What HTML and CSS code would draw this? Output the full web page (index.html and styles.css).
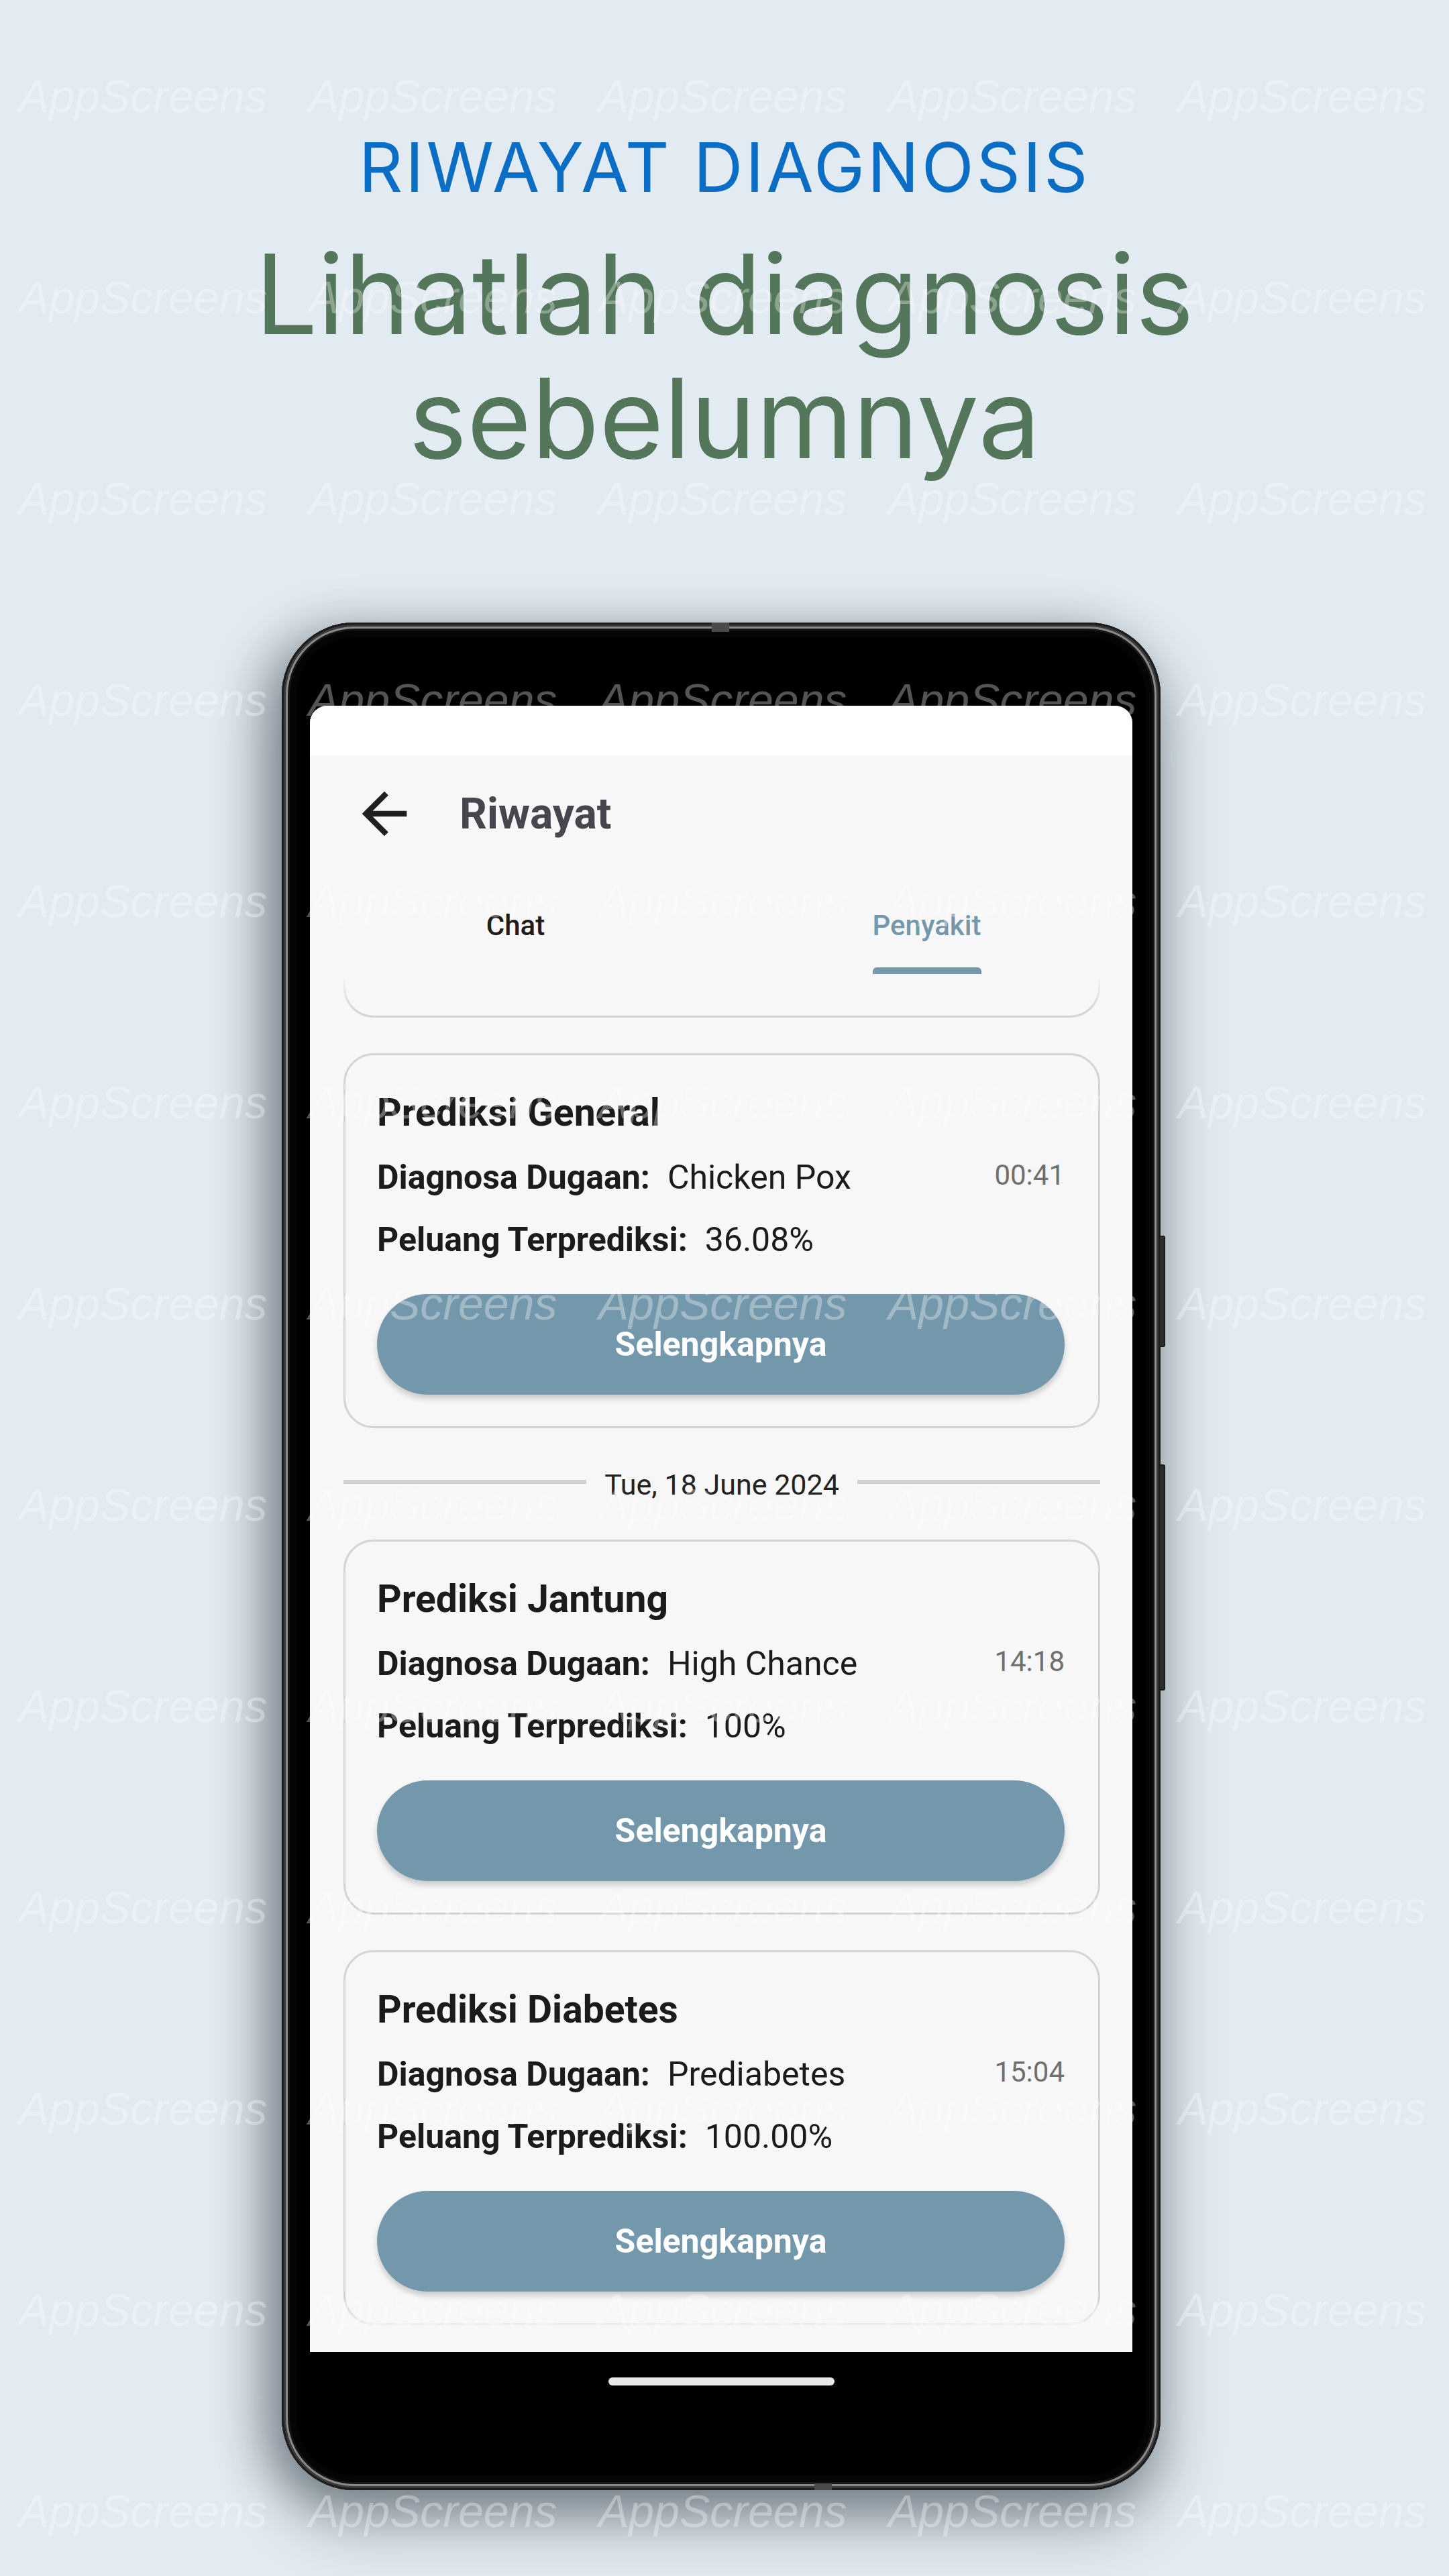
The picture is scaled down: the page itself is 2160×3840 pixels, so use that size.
FILE: index.html
```html
<!DOCTYPE html>
<html lang="id">
<head>
<meta charset="utf-8">
<title>Riwayat Diagnosis</title>
<link rel="stylesheet" href="styles.css">
</head>
<body>
<main class="page">
  <header class="hero">
    <p class="eyebrow">RIWAYAT DIAGNOSIS</p>
    <h1 class="headline">Lihatlah diagnosis<br>sebelumnya</h1>
  </header>

  <div class="phone">
    <span class="antenna antenna-top"></span>
    <span class="antenna antenna-bottom"></span>
    <span class="side-btn side-btn-1"></span>
    <span class="side-btn side-btn-2"></span>

    <div class="screen">
      <div class="statusbar"></div>
      <div class="appbar">
        <svg class="back" viewBox="0 0 24 24" aria-hidden="true"><path d="M20 11H7.83l5.59-5.59L12 4l-8 8 8 8 1.41-1.41L7.83 13H20v-2z"/></svg>
        <span class="appbar-title">Riwayat</span>
      </div>
      <div class="tabs">
        <div class="tab"><span class="tab-label">Chat</span><span class="tab-ind"></span></div>
        <div class="tab tab-active"><span class="tab-label">Penyakit</span><span class="tab-ind"></span></div>
      </div>

      <div class="list">
        <div class="card-tail"></div>

        <article class="card">
          <h2 class="card-title">Prediksi General</h2>
          <div class="card-row">
            <p class="row-text"><b>Diagnosa Dugaan:</b><span class="val">Chicken Pox</span></p>
            <span class="time">00:41</span>
          </div>
          <div class="card-row card-row-2">
            <p class="row-text"><b>Peluang Terprediksi:</b><span class="val">36.08%</span></p>
          </div>
          <button class="more">Selengkapnya</button>
        </article>

        <div class="date-divider">
          <span class="rule"></span>
          <span class="date">Tue, 18 June 2024</span>
          <span class="rule"></span>
        </div>

        <article class="card">
          <h2 class="card-title">Prediksi Jantung</h2>
          <div class="card-row">
            <p class="row-text"><b>Diagnosa Dugaan:</b><span class="val">High Chance</span></p>
            <span class="time">14:18</span>
          </div>
          <div class="card-row card-row-2">
            <p class="row-text"><b>Peluang Terprediksi:</b><span class="val">100%</span></p>
          </div>
          <button class="more">Selengkapnya</button>
        </article>

        <article class="card card-gap">
          <h2 class="card-title">Prediksi Diabetes</h2>
          <div class="card-row">
            <p class="row-text"><b>Diagnosa Dugaan:</b><span class="val">Prediabetes</span></p>
            <span class="time">15:04</span>
          </div>
          <div class="card-row card-row-2">
            <p class="row-text"><b>Peluang Terprediksi:</b><span class="val">100.00%</span></p>
          </div>
          <button class="more">Selengkapnya</button>
        </article>

        <div class="fade fade-top"></div>
        <div class="fade fade-bottom"></div>
      </div>
    </div>

    <div class="home-indicator"></div>
  </div>
</main>

<div class="watermark" aria-hidden="true">
  <span>AppScreens</span><span>AppScreens</span><span>AppScreens</span><span>AppScreens</span><span>AppScreens</span>
  <span>AppScreens</span><span>AppScreens</span><span>AppScreens</span><span>AppScreens</span><span>AppScreens</span>
  <span>AppScreens</span><span>AppScreens</span><span>AppScreens</span><span>AppScreens</span><span>AppScreens</span>
  <span>AppScreens</span><span>AppScreens</span><span>AppScreens</span><span>AppScreens</span><span>AppScreens</span>
  <span>AppScreens</span><span>AppScreens</span><span>AppScreens</span><span>AppScreens</span><span>AppScreens</span>
  <span>AppScreens</span><span>AppScreens</span><span>AppScreens</span><span>AppScreens</span><span>AppScreens</span>
  <span>AppScreens</span><span>AppScreens</span><span>AppScreens</span><span>AppScreens</span><span>AppScreens</span>
  <span>AppScreens</span><span>AppScreens</span><span>AppScreens</span><span>AppScreens</span><span>AppScreens</span>
  <span>AppScreens</span><span>AppScreens</span><span>AppScreens</span><span>AppScreens</span><span>AppScreens</span>
  <span>AppScreens</span><span>AppScreens</span><span>AppScreens</span><span>AppScreens</span><span>AppScreens</span>
  <span>AppScreens</span><span>AppScreens</span><span>AppScreens</span><span>AppScreens</span><span>AppScreens</span>
  <span>AppScreens</span><span>AppScreens</span><span>AppScreens</span><span>AppScreens</span><span>AppScreens</span>
  <span>AppScreens</span><span>AppScreens</span><span>AppScreens</span><span>AppScreens</span><span>AppScreens</span>
</div>
</body>
</html>
```

FILE: styles.css
```css
* { box-sizing: border-box; }

html, body {
  margin: 0;
  padding: 0;
}

body {
  width: 2160px;
  height: 3840px;
  overflow: hidden;
  position: relative;
  background: #e2ebf1;
  font-family: Roboto, "Noto Sans", sans-serif;
}

.page {
  width: 2160px;
  height: 3840px;
  padding-top: 189px;
}

/* ---------- hero ---------- */
.hero {
  text-align: center;
}

.eyebrow {
  margin: 0;
  font-family: Inter, "Noto Sans", sans-serif;
  font-weight: 400;
  font-size: 102px;
  line-height: 120px;
  letter-spacing: 3.8px;
  color: #0b6dc3;
}

.headline {
  margin: 37px 0 0;
  font-family: Inter, "Noto Sans", sans-serif;
  font-weight: 400;
  font-size: 165px;
  line-height: 185px;
  letter-spacing: 0;
  color: #54765a;
}

/* ---------- phone ---------- */
.phone {
  position: relative;
  width: 1310px;
  height: 2784px;
  margin: 212px 0 0 420px;
  padding: 124px 42px 0;
  border-radius: 108px;
  background: #000;
  display: flex;
  flex-direction: column;
  box-shadow:
    inset 0 0 0 3px #1c1c1c,
    inset 0 0 0 6px #3a3a3a,
    inset 0 0 0 9px #8a8a8a,
    inset 0 0 0 12px #161616,
    inset 0 0 0 22px #050505,
    0 45px 90px rgba(40, 50, 60, 0.45),
    -30px 10px 70px rgba(40, 50, 60, 0.35);
}

.antenna {
  position: absolute;
  background: #4a4a4a;
}
.antenna-top { top: 0; left: 641px; width: 26px; height: 14px; }
.antenna-bottom { bottom: 0; left: 794px; width: 26px; height: 10px; }

.side-btn {
  position: absolute;
  right: -7px;
  width: 8px;
  border-radius: 0 3px 3px 0;
  background: #2c2c2c;
  border: 2px solid #1a1a1a;
  border-left: none;
}
.side-btn-1 { top: 914px; height: 166px; }
.side-btn-2 { top: 1255px; height: 337px; }

.screen {
  width: 1226px;
  height: 2454px;
  border-radius: 26px 26px 0 0;
  overflow: hidden;
  background: #f7f7f7;
  display: flex;
  flex-direction: column;
  flex: none;
}

.statusbar {
  height: 74px;
  background: #ffffff;
  flex: none;
}

.appbar {
  height: 174px;
  display: flex;
  align-items: center;
  padding-left: 61px;
  flex: none;
}

.back {
  width: 100px;
  height: 100px;
  fill: #1f1f1f;
  flex: none;
}

.appbar-title {
  margin-left: 62px;
  font-size: 64px;
  font-weight: 700;
  color: #47454e;
}

.tabs {
  display: flex;
  height: 152px;
  padding-top: 55px;
  flex: none;
}

.tab {
  flex: 1;
  display: flex;
  flex-direction: column;
  align-items: center;
}

.tab-label {
  font-size: 42px;
  line-height: 50px;
  font-weight: 500;
  color: #1c1c1c;
}

.tab-ind {
  margin-top: 37px;
  width: 162px;
  height: 10px;
  border-radius: 6px 6px 0 0;
  background: transparent;
}

.tab-active .tab-label { color: #7398ac; }
.tab-active .tab-ind { background: #7498ac; }

/* ---------- list ---------- */
.list {
  position: relative;
  flex: 1;
  overflow: hidden;
  padding: 0 48px 0 50px;
}

.card-tail {
  height: 65px;
  border: 3px solid #d4d4d4;
  border-top: none;
  border-radius: 0 0 45px 45px;
}

.card {
  margin-top: 53px;
  height: 559px;
  border: 3px solid #d4d4d4;
  border-radius: 45px;
  padding: 52px 50px 0 47px;
  display: flex;
  flex-direction: column;
}

.card-title {
  margin: 0;
  font-size: 57px;
  line-height: 68px;
  font-weight: 700;
  color: #1b1b1b;
}

.card-row {
  margin-top: 34px;
  display: flex;
  justify-content: space-between;
  align-items: flex-start;
}

.card-row-2 { margin-top: 37px; }

.row-text {
  margin: 0;
  font-size: 50px;
  line-height: 56px;
  color: #1b1b1b;
}

.row-text b { font-weight: 700; }

.val {
  margin-left: 26px;
  font-weight: 400;
}

.time {
  font-size: 42px;
  line-height: 50px;
  color: #6f6f6f;
}

.more {
  margin-top: 53px;
  height: 150px;
  width: 100%;
  border: none;
  border-radius: 75px;
  background: #7498ab;
  color: #ffffff;
  font-family: Roboto, "Noto Sans", sans-serif;
  font-size: 50px;
  font-weight: 700;
  box-shadow: 0 6px 8px rgba(0, 0, 0, 0.18);
}

.date-divider {
  margin-top: 54px;
  height: 60px;
  display: flex;
  align-items: center;
  gap: 27px;
}

.rule {
  flex: 1;
  height: 6px;
  margin-bottom: 8px;
  background: #d1d1d1;
}

.date {
  font-size: 43px;
  line-height: 60px;
  color: #222222;
}

.date-divider + .card { margin-top: 52px; }

.fade {
  position: absolute;
  left: 0;
  right: 0;
  pointer-events: none;
}
.fade-top {
  top: 0;
  height: 56px;
  background: linear-gradient(to bottom, #f7f7f7 0%, rgba(247, 247, 247, 0) 100%);
}
.fade-bottom {
  bottom: 0;
  height: 80px;
  background: linear-gradient(to bottom, rgba(247, 247, 247, 0) 0%, #f7f7f7 70%);
}

.home-indicator {
  margin-top: 38px;
  align-self: center;
  width: 337px;
  height: 12px;
  border-radius: 6px;
  background: #e8e8e8;
}

/* ---------- watermark ---------- */
.watermark {
  position: absolute;
  top: 0;
  left: 0;
  width: 2160px;
  height: 3840px;
  padding: 103px 0 0 28px;
  display: grid;
  grid-template-columns: repeat(5, 432px);
  grid-auto-rows: 80px;
  row-gap: 220px;
  pointer-events: none;
  font-family: "Liberation Sans", Arimo, sans-serif;
  font-style: italic;
  font-size: 68px;
  line-height: 80px;
  color: rgba(255, 255, 255, 0.33);
  white-space: nowrap;
}
```
